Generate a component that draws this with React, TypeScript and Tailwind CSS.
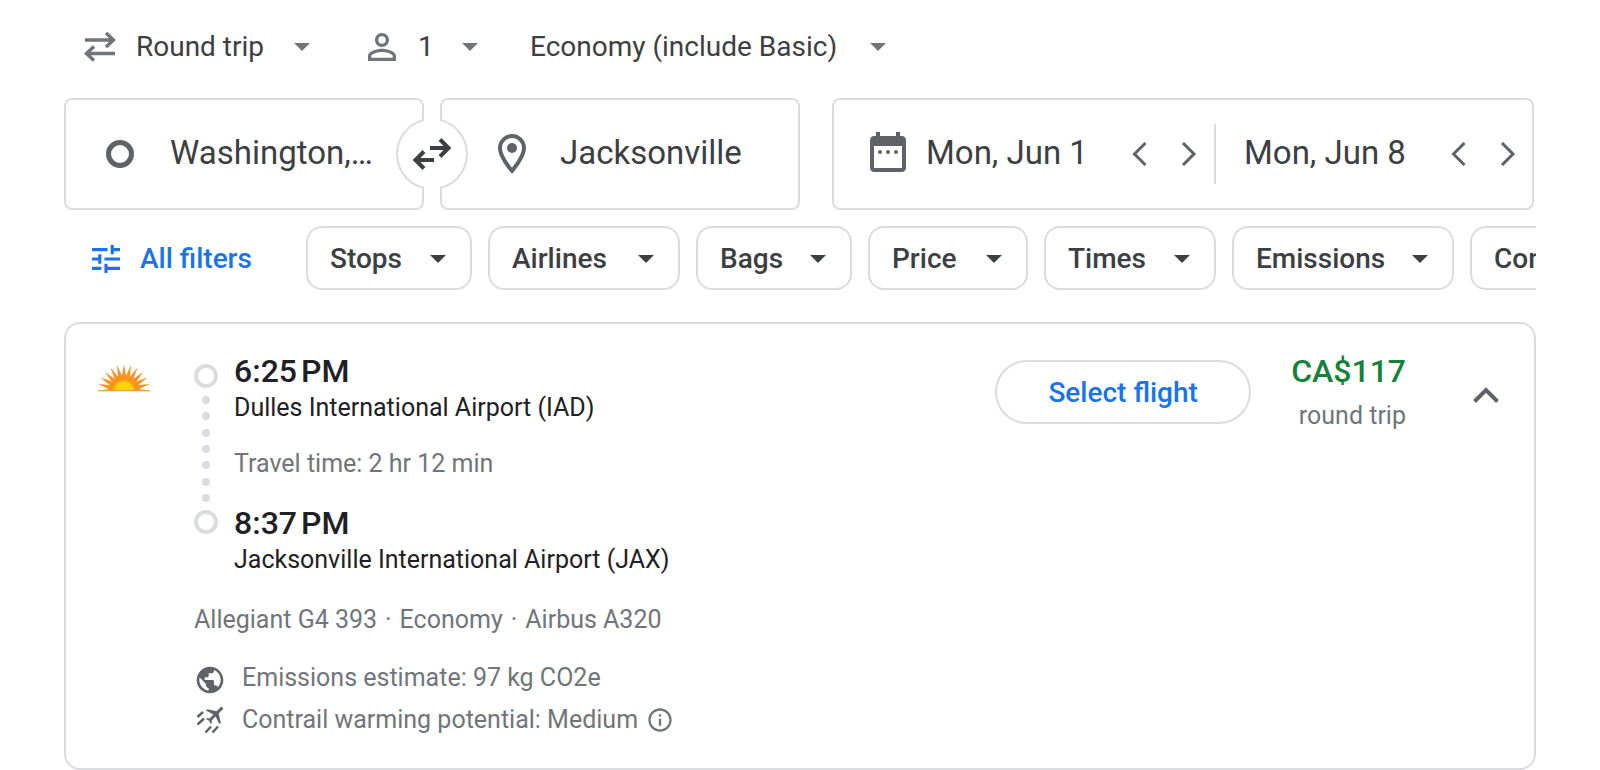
import { useState } from 'react'

const filters = [
  { name: 'Stops', width: 'w-[166px]' },
  { name: 'Airlines', width: 'w-[192px]' },
  { name: 'Bags', width: 'w-[156px]' },
  { name: 'Price', width: 'w-[160px]' },
  { name: 'Times', width: 'w-[172px]' },
  { name: 'Emissions', width: 'w-[222px]' },
  { name: 'Connecting airports', width: 'w-[352px]' },
]

const point = (radius: number, degrees: number) => {
  const a = (degrees * Math.PI) / 180
  return `${(26 + radius * Math.cos(a)).toFixed(2)},${(27 - radius * Math.sin(a)).toFixed(2)}`
}

// half star standing on the horizon line
const halfStar = (rays: number, outer: number, inner: number) => {
  const step = 180 / (rays - 1)
  const points: string[] = []
  for (let i = 0; i < rays; i++) {
    points.push(point(outer, i * step))
    if (i < rays - 1) points.push(point(inner, (i + 0.5) * step))
  }
  return points.join(' ')
}

const Caret = ({ className = '' }: { className?: string }) => (
  <svg viewBox="0 0 16 8" className={`h-2 w-4 shrink-0 ${className}`} fill="currentColor" aria-hidden="true">
    <path d="M0 0h16L8 8z" />
  </svg>
)

const Chevron = ({ d }: { d: string }) => (
  <svg viewBox="0 0 24 24" className="size-6" fill="none" stroke="currentColor" strokeWidth="3" aria-hidden="true">
    <path d={d} />
  </svg>
)

const AirlineLogo = () => (
  <svg viewBox="0 0 52 28" className="h-7 w-[52px]" role="img" aria-label="Allegiant">
    <polygon points={halfStar(13, 27, 15.5)} fill="#f7931e" />
    <polygon points={halfStar(13, 12.5, 9.5)} fill="#fdb913" />
    <path d="M16.500 27a9.500 9.500 0 0 1 19 0z" fill="#ffd400" />
    <path d="M0 26h52v1.200H0z" fill="#f9a03c" />
  </svg>
)

const DateField = ({ label, value }: { label: string; value: string }) => {
  const [date, setDate] = useState(value)
  return (
    <>
      <input
        aria-label={label}
        value={date}
        onChange={(e) => setDate(e.target.value)}
        className="mb-0.5 w-[176px] min-w-0 text-[33px] leading-10 outline-none"
      />
      <div className="ml-auto flex gap-6 text-[#5f6368]">
        <button type="button" aria-label={`${label}: previous day`}>
          <Chevron d="M17.500 1L6.500 12l11 11" />
        </button>
        <button type="button" aria-label={`${label}: next day`}>
          <Chevron d="M7 1l11 11L7 23" />
        </button>
      </div>
    </>
  )
}

const TripOptions = () => (
  <div className="flex h-12 items-center pl-5 text-[28px] leading-9">
    <svg viewBox="0 0 32 30" className="h-[30px] w-8 text-[#70757a]" fill="none" stroke="currentColor" strokeWidth="3.500" aria-hidden="true">
      <path d="M1 8h29M22 1l7.500 7L22 15M31 21.500H2M10 14.500L2.500 21.500L10 28.500" />
    </svg>
    <select aria-label="Trip type" className="ml-5 w-[158px] appearance-none outline-none">
      <option>Round trip</option>
      <option>One way</option>
      <option>Multi-city</option>
    </select>
    <Caret className="text-[#70757a]" />
    <button type="button" aria-label="1 passenger" className="ml-[58px] flex items-center">
      <svg viewBox="4 4 16 16" className="size-7 text-[#70757a]" fill="currentColor" aria-hidden="true">
        <path d="M12 5.900a2.100 2.100 0 1 1 0 4.200 2.100 2.100 0 0 1 0-4.200m0 9c2.970 0 6.100 1.460 6.100 2.100v1.100H5.900V17c0-.64 3.130-2.100 6.100-2.100M12 4C9.790 4 8 5.790 8 8s1.790 4 4 4 4-1.790 4-4-1.790-4-4-4m0 9c-2.670 0-8 1.340-8 4v3h16v-3c0-2.660-5.330-4-8-4" />
      </svg>
      <span className="ml-[22px] w-11 text-left">1</span>
      <Caret className="text-[#70757a]" />
    </button>
    <select aria-label="Seating class" className="ml-[52px] w-[340px] appearance-none outline-none">
      <option>Economy (include Basic)</option>
      <option>Premium economy</option>
      <option>Business</option>
      <option>First</option>
    </select>
    <Caret className="text-[#70757a]" />
  </div>
)

const SearchFields = () => (
  <div className="mt-[27px] grid grid-cols-[736fr_702fr] gap-8 pr-0.5">
    <div className="relative grid grid-cols-2 gap-4">
      <label className="flex h-28 items-center rounded-lg border-2 border-[#dadce0] pl-10">
        <span className="size-7 shrink-0 rounded-full border-5 border-[#5f6368]" />
        <input
          aria-label="Where from?"
          defaultValue="Washington,…"
          className="mb-0.5 ml-9 w-full min-w-0 text-[33px] leading-10 outline-none"
        />
      </label>
      <label className="flex h-28 items-center rounded-lg border-2 border-[#dadce0] pl-[46px]">
        <svg viewBox="0 0 24 24" className="size-12 shrink-0 text-[#5f6368]" fill="currentColor" aria-hidden="true">
          <path d="M12 2C8.130 2 5 5.130 5 9c0 5.250 7 13 7 13s7-7.750 7-13c0-3.870-3.130-7-7-7M7 9c0-2.760 2.240-5 5-5s5 2.240 5 5c0 2.880-2.880 7.190-5 9.880C9.920 16.210 7 11.850 7 9" />
          <circle cx="12" cy="9" r="2.500" />
        </svg>
        <input
          aria-label="Where to?"
          defaultValue="Jacksonville"
          className="mb-0.5 ml-6 w-full min-w-0 text-[33px] leading-10 outline-none"
        />
      </label>
      <button
        type="button"
        aria-label="Swap origin and destination"
        className="absolute top-1/2 left-1/2 flex size-[72px] -translate-x-1/2 -translate-y-1/2 items-center justify-center rounded-full border-2 border-[#dadce0] bg-white"
      >
        <span className="absolute -inset-y-0.5 left-1/2 w-4 -translate-x-1/2 bg-white" />
        <svg viewBox="0 0 40 32" className="relative h-8 w-10" fill="none" stroke="currentColor" strokeWidth="4" aria-hidden="true">
          <path d="M18 10h19M28 1.500L36.500 10L28 18.500M22 22H3M12 13.500L3.500 22l8.500 8.500" />
        </svg>
      </button>
    </div>
    <div className="flex h-28 items-center rounded-lg border-2 border-[#dadce0] pr-[13px] pl-[30px]">
      <svg viewBox="0 0 24 24" className="mb-1 size-12 shrink-0 text-[#5f6368]" fill="currentColor" aria-hidden="true">
        <path d="M19 4h-1V2h-2v2H8V2H6v2H5c-1.110 0-2 .9-2 2v14c0 1.100.89 2 2 2h14c1.100 0 2-.9 2-2V6c0-1.100-.9-2-2-2m0 16H5V9h14z" />
        <circle cx="8" cy="12" r="1" />
        <circle cx="12" cy="12" r="1" />
        <circle cx="16" cy="12" r="1" />
      </svg>
      <div className="ml-[14px] flex flex-1 items-center pr-[14px]">
        <DateField label="Departure" value="Mon, Jun 1" />
      </div>
      <div className="flex h-15 w-[305px] items-center border-l-2 border-[#dadce0] pl-7">
        <DateField label="Return" value="Mon, Jun 8" />
      </div>
    </div>
  </div>
)

const FilterBar = () => (
  <div className="mt-4 flex gap-4 overflow-hidden text-[28px] leading-9 font-medium">
    <button type="button" className="flex h-16 w-[226px] shrink-0 items-center pt-0.5 pl-7 text-[#1a73e8]">
      <svg viewBox="3 3 18 18" className="size-7" fill="currentColor" aria-hidden="true">
        <path d="M3 17v2h6v-2zM3 5v2h10V5zm10 16v-2h8v-2h-8v-2h-2v6zM7 9v2H3v2h4v2h2V9zm14 4v-2H11v2zm-6-4h2V7h4V5h-4V3h-2z" />
      </svg>
      <span className="ml-5">All filters</span>
    </button>
    {filters.map((filter) => (
      <button
        key={filter.name}
        type="button"
        className={`flex h-16 shrink-0 items-center justify-between rounded-2xl border-2 border-[#dadce0] pt-0.5 pr-6 pl-[22px] ${filter.width}`}
      >
        {filter.name}
        <Caret />
      </button>
    ))}
  </div>
)

const Timeline = () => (
  <div className="flex flex-col items-center pt-3">
    <span className="size-6 rounded-full border-4 border-[#dadce0]" />
    <div className="flex h-[122px] flex-col justify-between py-2">
      {Array.from({ length: 7 }, (_, i) => (
        <span key={i} className="size-2 rounded-full bg-[#dadce0]" />
      ))}
    </div>
    <span className="size-6 rounded-full border-4 border-[#dadce0]" />
  </div>
)

const FlightCard = () => (
  <div className="mt-8 flex items-start rounded-2xl border-2 border-[#dadce0] pt-7 pr-6 pb-8 pl-8 text-[25px] leading-8 text-[#70757a]">
    <div className="mt-3 w-24 shrink-0">
      <AirlineLogo />
    </div>
    <div className="flex-1">
      <div className="flex gap-4">
        <Timeline />
        <div className="text-[#202124]">
          <div className="pb-0.5 text-[32px] leading-[38px] font-medium">6:25{'\u202f'}PM</div>
          <div>Dulles International Airport (IAD)</div>
          <div className="my-6 text-[#70757a]">Travel time: 2 hr 12 min</div>
          <div className="pb-0.5 text-[32px] leading-[38px] font-medium">8:37{'\u202f'}PM</div>
          <div>Jacksonville International Airport (JAX)</div>
        </div>
      </div>
      <div className="mt-7 flex gap-2">
        <span>Allegiant G4 393</span>
        <span>·</span>
        <span>Economy</span>
        <span>·</span>
        <span>Airbus A320</span>
      </div>
      <div className="mt-[26px] flex items-start gap-4">
        <svg viewBox="0 0 24 24" className="mt-0.5 size-8 text-[#5f6368]" fill="currentColor" aria-hidden="true">
          <path d="M12 2C6.480 2 2 6.480 2 12s4.480 10 10 10 10-4.480 10-10S17.520 2 12 2m-1 17.930c-3.950-.49-7-3.850-7-7.930 0-.62.080-1.210.210-1.790L9 15v1c0 1.100.9 2 2 2zm6.900-2.540c-.26-.81-1-1.390-1.900-1.390h-1v-3c0-.55-.45-1-1-1H8v-2h2c.55 0 1-.45 1-1V7h2c1.100 0 2-.9 2-2v-.41c2.930 1.190 5 4.060 5 7.410 0 2.080-.8 3.970-2.100 5.390" />
        </svg>
        Emissions estimate: 97 kg CO2e
      </div>
      <div className="mt-2 flex items-center gap-4">
        <svg viewBox="0 0 32 32" className="size-8 text-[#5f6368]" fill="currentColor" aria-hidden="true">
          <path
            transform="translate(21.500 10.500) rotate(45) translate(-11.500 -12)"
            d="M21 16v-2l-8-5V3.500c0-.83-.67-1.500-1.500-1.500S10 2.670 10 3.500V9l-8 5v2l8-2.500V19l-2 1.500V22l3.500-1 3.500 1v-1.500L13 19v-5.500z"
          />
          <path d="M3.500 13l5.500-5M3.500 20.500l6.500-6M11.500 28.500l5.500-6M18.500 28.500l5.500-6" stroke="currentColor" strokeWidth="2.500" />
        </svg>
        <span>Contrail warming potential: Medium</span>
        <button type="button" aria-label="About contrails" className="-ml-2">
          <svg viewBox="0 0 24 24" className="size-7" fill="currentColor" aria-hidden="true">
            <path d="M11 7h2v2h-2zm0 4h2v6h-2zm1-9C6.480 2 2 6.480 2 12s4.480 10 10 10 10-4.480 10-10S17.520 2 12 2m0 18c-4.410 0-8-3.590-8-8s3.590-8 8-8 8 3.590 8 8-3.590 8-8 8" />
          </svg>
        </button>
      </div>
    </div>
    <button
      type="button"
      className="mt-2 h-16 w-64 rounded-full border-2 border-[#dadce0] pt-0.5 text-[28px] leading-9 font-medium text-[#1a73e8]"
    >
      Select flight
    </button>
    <div className="ml-10 text-right">
      <div className="pb-0.5 text-[32px] leading-[38px] font-medium text-[#188038]">CA$117</div>
      <div className="mt-2">round trip</div>
    </div>
    <button type="button" aria-label="Hide flight details" className="mt-5 ml-14 text-[#5f6368]">
      <svg viewBox="0 0 48 48" className="size-12" fill="none" stroke="currentColor" strokeWidth="4" aria-hidden="true">
        <path d="M12.500 29.500L24 18l11.500 11.500" />
      </svg>
    </button>
  </div>
)

export default function App() {
  return (
    <main className="bg-white px-16 pt-[23px] font-[Roboto,sans-serif] text-[#3c4043]">
      <TripOptions />
      <SearchFields />
      <FilterBar />
      <FlightCard />
    </main>
  )
}
